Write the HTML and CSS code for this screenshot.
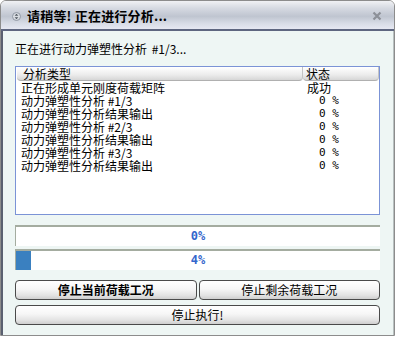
FILE: index.html
```html
<!DOCTYPE html>
<html lang="zh-CN">
<head>
    <meta charset="UTF-8">
    <title>请稍等! 正在进行分析...</title>
    <link rel="stylesheet" href="styles.css">
</head>
<body>
    <div class="window">
        <div class="titlebar">
            <svg class="title-icon" width="9" height="9" viewBox="0 0 9 9">
                <circle cx="4.5" cy="4.5" r="4" fill="#d8dce2" stroke="#9098a4"/>
                <path d="M4.5 1.8 L6.3 3.8 H2.7 Z M4.5 7.2 L6.3 5.2 H2.7 Z" fill="#505860"/>
            </svg>
            <span class="title-text">请稍等! 正在进行分析...</span>
            <svg class="close" width="10" height="10" viewBox="0 0 10 10">
                <path d="M1.5 1.5 L8.5 8.5 M8.5 1.5 L1.5 8.5" stroke="#8c9098" stroke-width="2.2"/>
            </svg>
        </div>
        <div class="content">
            <p class="status-line">正在进行动力弹塑性分析 #1/3...</p>
            <div class="list">
                <div class="list-head">
                    <span class="col-type">分析类型</span>
                    <span class="col-state">状态</span>
                </div>
                <div class="row"><span class="col-type">正在形成单元刚度荷载矩阵</span><span class="col-state">成功</span></div>
                <div class="row"><span class="col-type">动力弹塑性分析 #1/3</span><span class="col-state pct">0 %</span></div>
                <div class="row"><span class="col-type">动力弹塑性分析结果输出</span><span class="col-state pct">0 %</span></div>
                <div class="row"><span class="col-type">动力弹塑性分析 #2/3</span><span class="col-state pct">0 %</span></div>
                <div class="row"><span class="col-type">动力弹塑性分析结果输出</span><span class="col-state pct">0 %</span></div>
                <div class="row"><span class="col-type">动力弹塑性分析 #3/3</span><span class="col-state pct">0 %</span></div>
                <div class="row"><span class="col-type">动力弹塑性分析结果输出</span><span class="col-state pct">0 %</span></div>
            </div>
            <div class="progress">
                <div class="fill" style="width: 0%"></div>
                <span class="label">0%</span>
            </div>
            <div class="progress second">
                <div class="fill" style="width: 4%"></div>
                <span class="label">4%</span>
            </div>
            <div class="buttons">
                <button class="btn bold">停止当前荷载工况</button>
                <button class="btn">停止剩余荷载工况</button>
                <button class="btn wide">停止执行!</button>
            </div>
        </div>
    </div>
</body>
</html>
```

FILE: styles.css
```css
body {
    margin: 0;
    background: #ffffff;
    font-family: "Noto Sans CJK SC", "DejaVu Sans", sans-serif;
    font-size: 12px;
    color: #000;
}
.window {
    width: 393px;
    height: 334px;
    border: 1px solid #8c8c8c;
    border-radius: 6px 6px 0 0;
    display: flex;
    flex-direction: column;
    overflow: hidden;
}
.titlebar {
    height: 30px;
    flex: none;
    display: flex;
    align-items: center;
    padding: 0 12px 0 11px;
    background: linear-gradient(#f0f1f4 0%, #d6dae2 25%, #bfc5d0 55%, #d8dce6 80%, #e6e8f2 100%);
    border-bottom: 2px solid #5e6680;
    box-sizing: border-box;
}
.title-icon {
    margin-right: 6px;
    margin-top: 2px;
}
.title-text {
    font-weight: bold;
    font-size: 13px;
    letter-spacing: 0.2px;
    flex: 1;
}
.close {
    margin-top: 2px;
}
.content {
    flex: 1;
    background: #eef6f4;
    border-left: 2px solid #5a6070;
    border-right: 1px solid #b8c0c0;
    padding: 0 13px 0 12px;
    display: flex;
    flex-direction: column;
}
.status-line {
    margin: 8px 0 0;
    height: 19px;
    line-height: 19px;
    word-spacing: 2px;
}
.list {
    margin-top: 8px;
    height: 147px;
    border: 1px solid #7b93d6;
    background: #fff;
}
.list-head {
    display: flex;
    height: 14px;
    line-height: 14px;
    margin: 0 1px;
}
.list-head span {
    background: linear-gradient(#ffffff, #ececec 60%, #d6d6d6);
    border-radius: 0 0 4px 4px;
    border-right: 1px solid #c4c4c4;
    border-bottom: 1px solid #b0b0b0;
}
.col-type {
    flex: none;
    width: 279px;
    padding-left: 6px;
}
.col-state {
    flex: none;
    width: 72px;
    padding-left: 3px;
}
.row {
    display: flex;
    height: 13px;
    line-height: 13px;
    margin-left: 1px;
}
.row .col-type {
    width: 280px;
    padding-left: 4px;
    padding-right: 2px;
}
.row .col-state {
    width: 60px;
    padding-left: 4px;
}
.row .pct {
    padding-left: 16px;
    font-family: "DejaVu Sans Mono", monospace;
    font-size: 11px;
}
.progress {
    position: relative;
    margin-top: 10px;
    height: 21px;
    background: #fff;
    border-top: 2px solid #a4aca0;
    border-left: 1px solid #a4aca0;
    box-sizing: border-box;
}
.progress.second {
    margin-top: 3px;
}
.fill {
    height: 100%;
    background: #3a80c0;
}
.label {
    position: absolute;
    left: 0;
    right: 0;
    top: 0;
    line-height: 19px;
    text-align: center;
    font-family: "DejaVu Sans Mono", monospace;
    font-weight: bold;
    font-size: 12px;
    color: #3366cc;
}
.buttons {
    margin-top: 10px;
    display: grid;
    grid-template-columns: 1fr 1fr;
    column-gap: 2px;
    row-gap: 5px;
}
.btn {
    height: 20px;
    padding: 0;
    font-family: inherit;
    font-size: 12px;
    color: #000;
    background: linear-gradient(#ffffff 0%, #f6f6f6 45%, #e2e2e2 80%, #cfcfcf 100%);
    border: 1px solid #4a4a4a;
    border-radius: 4px;
    line-height: 18px;
}
.btn.bold {
    font-weight: bold;
}
.btn.wide {
    grid-column: 1 / 3;
}
```
